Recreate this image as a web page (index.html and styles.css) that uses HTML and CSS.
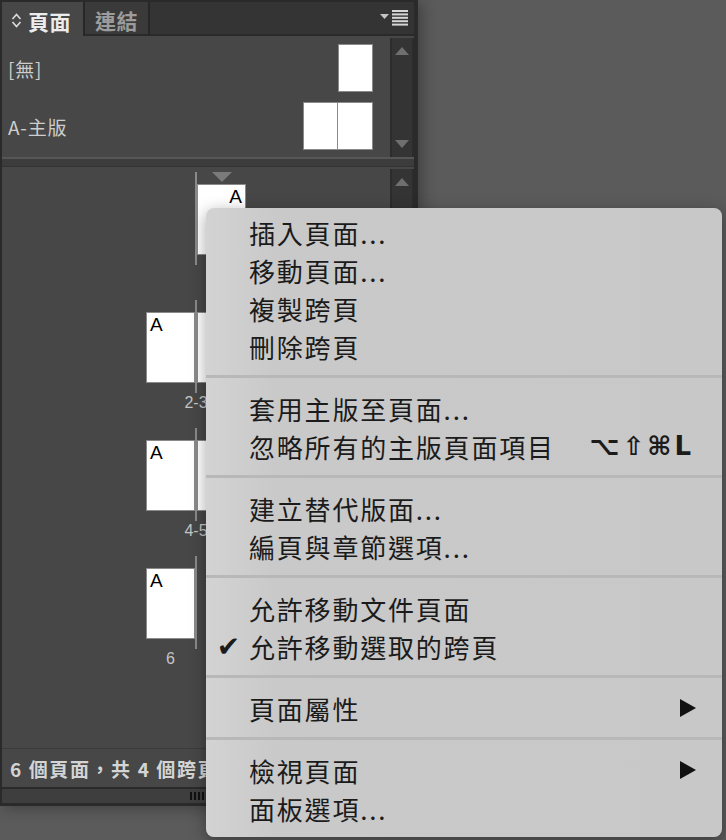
FILE: index.html
```html
<!DOCTYPE html>
<html lang="zh-Hant">
<head>
    <meta charset="UTF-8">
    <meta name="viewport" content="width=device-width, initial-scale=1.0">
    <title>頁面</title>
    <link rel="stylesheet" href="styles.css">
</head>
<body>

    <div class="panel">
        <!-- Pestañas -->
        <div class="tabs">
            <div class="tab active">
                <svg class="tab-arrows" width="11" height="17" viewBox="0 0 11 17">
                    <polyline points="1.5,7 5.5,2.5 9.5,7" />
                    <polyline points="1.5,10 5.5,14.5 9.5,10" />
                </svg>
                頁面
            </div>
            <div class="tab">連結</div>
            <div class="tab-fill">
                <svg width="28" height="16" viewBox="0 0 28 16">
                    <polygon points="0,4 9,4 4.5,9" fill="#c4c4c4" />
                    <rect x="12" y="0" width="16" height="2" fill="#d6d6d6" />
                    <rect x="12" y="3.4" width="16" height="2" fill="#d6d6d6" />
                    <rect x="12" y="6.8" width="16" height="2" fill="#d6d6d6" />
                    <rect x="12" y="10.2" width="16" height="2" fill="#d6d6d6" />
                    <rect x="12" y="13.6" width="16" height="2" fill="#d6d6d6" />
                </svg>
            </div>
        </div>

        <!-- Páginas maestras -->
        <div class="masters">
            <div class="master-list">
                <div class="master-row">
                    <span>[無]</span>
                    <div class="mthumb"></div>
                </div>
                <div class="master-row">
                    <span>A-主版</span>
                    <div class="mspread"><div class="mthumb"></div><div class="mthumb"></div></div>
                </div>
            </div>
            <div class="scrollbar">
                <span class="arrow-up"></span>
                <span class="arrow-down"></span>
            </div>
        </div>

        <div class="divider"></div>

        <!-- Páginas del documento -->
        <div class="pages">
            <div class="page-list">
                <div class="spread">
                    <div class="spread-row">
                        <div class="slot"></div>
                        <div class="spine"></div>
                        <div class="slot first">
                            <div class="marker"></div>
                            <div class="page right">A</div>
                        </div>
                    </div>
                    <div class="spread-label single">1</div>
                </div>
                <div class="spread">
                    <div class="spread-row">
                        <div class="slot"><div class="page">A</div></div>
                        <div class="spine"></div>
                        <div class="slot"><div class="page right">A</div></div>
                    </div>
                    <div class="spread-label">2-3</div>
                </div>
                <div class="spread">
                    <div class="spread-row">
                        <div class="slot"><div class="page">A</div></div>
                        <div class="spine"></div>
                        <div class="slot"><div class="page right">A</div></div>
                    </div>
                    <div class="spread-label">4-5</div>
                </div>
                <div class="spread">
                    <div class="spread-row">
                        <div class="slot"><div class="page">A</div></div>
                        <div class="spine"></div>
                        <div class="slot"></div>
                    </div>
                    <div class="spread-label left">6</div>
                </div>
            </div>
            <div class="scrollbar">
                <span class="arrow-up"></span>
            </div>
        </div>

        <div class="status">6 個頁面，共 4 個跨頁</div>
        <div class="bottom-bar">
            <svg width="14" height="8" viewBox="0 0 14 8">
                <rect x="0" y="0" width="2" height="8" fill="#111" />
                <rect x="4" y="0" width="2" height="8" fill="#111" />
                <rect x="8" y="0" width="2" height="8" fill="#111" />
                <rect x="12" y="0" width="2" height="8" fill="#111" />
            </svg>
        </div>
    </div>

    <!-- Menú del panel -->
    <div class="menu">
        <div class="item"><span class="mark"></span>插入頁面...</div>
        <div class="item"><span class="mark"></span>移動頁面...</div>
        <div class="item"><span class="mark"></span>複製跨頁</div>
        <div class="item"><span class="mark"></span>刪除跨頁</div>
        <div class="sep"></div>
        <div class="item"><span class="mark"></span>套用主版至頁面...</div>
        <div class="item"><span class="mark"></span>忽略所有的主版頁面項目<span class="shortcut">⌥⇧⌘L</span></div>
        <div class="sep"></div>
        <div class="item"><span class="mark"></span>建立替代版面...</div>
        <div class="item"><span class="mark"></span>編頁與章節選項...</div>
        <div class="sep"></div>
        <div class="item"><span class="mark"></span>允許移動文件頁面</div>
        <div class="item"><span class="mark">✔</span>允許移動選取的跨頁</div>
        <div class="sep"></div>
        <div class="item"><span class="mark"></span>頁面屬性<svg class="submenu" width="16" height="18" viewBox="0 0 16 18"><polygon points="0,0 16,9 0,18" /></svg></div>
        <div class="sep"></div>
        <div class="item"><span class="mark"></span>檢視頁面<svg class="submenu" width="16" height="18" viewBox="0 0 16 18"><polygon points="0,0 16,9 0,18" /></svg></div>
        <div class="item"><span class="mark"></span>面板選項...</div>
    </div>

</body>
</html>
```

FILE: styles.css
```css
body {
    margin: 0;
    background-color: #5b5b5b;
    font-family: "Noto Sans CJK TC", "Noto Sans", sans-serif;
    position: relative;
    min-height: 840px;
    overflow: hidden;
}

.panel {
    width: 412px;
    height: 801px;
    background-color: #474747;
    border: 2px solid #2a2a2a;
    border-right-width: 4px;
    border-bottom-width: 3px;
    display: flex;
    flex-direction: column;
    box-shadow: 4px 2px 14px rgba(0, 0, 0, 0.3);
}

/* pestañas */
.tabs {
    height: 34px;
    display: flex;
    background-color: #303030;
}

.tab {
    width: 67px;
    display: flex;
    align-items: center;
    justify-content: center;
    padding-top: 3px;
    box-sizing: border-box;
    font-size: 21px;
    font-weight: bold;
    letter-spacing: 0.5px;
    color: #9c9c9c;
    background-color: #3a3a3a;
    border-left: 2px solid #272727;
    border-right: 2px solid #272727;
    border-bottom: 2px solid #2a2a2a;
}

.tab.active {
    width: 81px;
    justify-content: flex-start;
    padding-left: 9px;
    color: #ececec;
    background-color: #474747;
    border: none;
}

.tab-arrows {
    margin-right: 6px;
    fill: none;
    stroke: #dcdcdc;
    stroke-width: 1.6;
}

.tab-fill {
    flex: 1;
    display: flex;
    justify-content: flex-end;
    align-items: center;
    padding-right: 6px;
    background-color: #343434;
    border-bottom: 2px solid #2a2a2a;
}

/* maestras */
.masters {
    height: 121px;
    display: flex;
}

.master-list {
    flex: 1;
    padding: 8px 17px 0 6px;
}

.master-row {
    height: 48px;
    margin-bottom: 10px;
    display: flex;
    justify-content: space-between;
    align-items: center;
    font-size: 19px;
    letter-spacing: 0.8px;
    color: #cdcdcd;
}

.mthumb {
    width: 35px;
    height: 48px;
    box-sizing: border-box;
    background-color: #fff;
    border: 1px solid #8a8a8a;
}

.mspread {
    display: flex;
}

.mspread .mthumb + .mthumb {
    border-left: none;
}

.scrollbar {
    width: 24px;
    box-sizing: border-box;
    margin-top: 2px;
    padding: 9px 0;
    background-color: #343434;
    border-left: 2px solid #2c2c2c;
    border-right: 2px solid #2c2c2c;
    display: flex;
    flex-direction: column;
    justify-content: space-between;
    align-items: center;
}

.arrow-up {
    width: 0;
    height: 0;
    border-left: 7px solid transparent;
    border-right: 7px solid transparent;
    border-bottom: 8px solid #6f6f6f;
}

.arrow-down {
    width: 0;
    height: 0;
    border-left: 7px solid transparent;
    border-right: 7px solid transparent;
    border-top: 8px solid #6f6f6f;
}

.divider {
    height: 10px;
    box-sizing: border-box;
    background-color: #3c3c3c;
    border-top: 2px solid #565656;
    border-bottom: 1px solid #333;
}

/* páginas */
.pages {
    height: 581px;
    display: flex;
}

.page-list {
    flex: 1;
    display: flex;
    flex-direction: column;
    align-items: center;
    padding-top: 5px;
}

.spread {
    width: 100px;
    margin-bottom: 15px;
}

.spread-row {
    display: flex;
    align-items: flex-start;
}

.slot {
    width: 49px;
    padding-top: 12px;
}

.slot.first {
    padding-top: 0;
}

.spine {
    width: 2px;
    height: 93px;
    background-color: #8a8a8a;
}

.marker {
    width: 0;
    height: 0;
    margin: 0 auto 2px;
    border-left: 10px solid transparent;
    border-right: 10px solid transparent;
    border-top: 10px solid #7a7a7a;
}

.page {
    width: 49px;
    height: 71px;
    box-sizing: border-box;
    padding: 2px 3px;
    background-color: #fff;
    border: 1px solid #8a8a8a;
    font-family: "Liberation Sans", Arial, sans-serif;
    font-size: 19px;
    line-height: 19px;
    color: #000;
}

.page.right {
    text-align: right;
}

.spread-label {
    font-family: "Liberation Sans", Arial, sans-serif;
    font-size: 16px;
    line-height: 20px;
    color: #c4c4c4;
    text-align: center;
}

.spread-label.single {
    padding-left: 51px;
}

.spread-label.left {
    padding-right: 51px;
}

.status {
    height: 39px;
    box-sizing: border-box;
    border-top: 1px solid #3b3b3b;
    padding-left: 8px;
    display: flex;
    align-items: center;
    font-size: 19px;
    font-weight: bold;
    letter-spacing: 1.6px;
    color: #d4d4d4;
    white-space: nowrap;
}

.bottom-bar {
    height: 16px;
    box-sizing: border-box;
    border-top: 2px solid #2a2a2a;
    background-color: #3e3e3e;
    padding-left: 188px;
    display: flex;
    align-items: center;
}

/* menú */
.menu {
    position: absolute;
    top: 208px;
    left: 206px;
    width: 516px;
    padding: 5px 0 10px;
    border-radius: 8px;
    background: linear-gradient(90deg, #d3d3d3 0, #c9c9c9 70px, #c8c8c8 100%);
    box-shadow: 0 4px 16px rgba(0, 0, 0, 0.35);
    color: #1b1b1b;
}

.item {
    height: 38px;
    display: flex;
    align-items: center;
    padding-right: 26px;
    font-size: 26px;
    letter-spacing: 1.8px;
    white-space: nowrap;
}

.mark {
    width: 43px;
    flex-shrink: 0;
    padding-left: 2px;
    box-sizing: border-box;
    text-align: center;
    font-family: "DejaVu Sans", sans-serif;
    font-size: 28px;
    letter-spacing: 0;
}

.shortcut {
    margin-left: auto;
    padding-right: 2px;
    font-family: "DejaVu Sans", sans-serif;
    font-size: 26px;
    font-weight: bold;
    letter-spacing: 3px;
}

.submenu {
    margin-left: auto;
    fill: #111;
}

.sep {
    height: 3px;
    margin: 10px 0 11px;
    background-color: #b8b8b8;
}
```
